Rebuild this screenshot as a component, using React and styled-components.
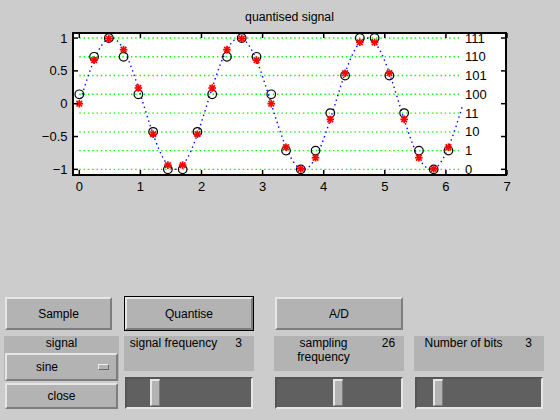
import React from 'react';
import styled, { createGlobalStyle } from 'styled-components';

const FONT = `"Liberation Sans", Arial, Helvetica, sans-serif`;

const GlobalStyle = createGlobalStyle`
  body {
    margin: 0;
    background: #cccccc;
    font-family: ${FONT};
  }
`;

const Figure = styled.div`
  width: 560px;
  height: 420px;
  display: flex;
  flex-direction: column;
  background: #cccccc;
  overflow: hidden;
`;

const PlotSvg = styled.svg`
  display: block;
  font-family: ${FONT};
`;

const Controls = styled.div`
  margin-top: auto;
  display: flex;
  padding: 0 0 11px 4px;
  font-size: 12px;
  color: #000;
`;

const Column = styled.div`
  display: flex;
  flex-direction: column;
  width: ${p => p.$w}px;
  margin-left: ${p => p.$gap || 0}px;
`;

const ButtonSlot = styled.div`
  height: 35px;
  display: flex;
`;

const PushButton = styled.button`
  box-sizing: border-box;
  width: ${p => p.$w}px;
  height: 33px;
  margin: 1px;
  padding: 0;
  background: #b3b3b3;
  border: 2px solid;
  border-color: #e6e6e6 #7d7d7d #7d7d7d #e6e6e6;
  outline: ${p => (p.$focused ? '1px solid #000' : 'none')};
  font-family: ${FONT};
  font-size: 12px;
  color: #000;
`;

const CloseButton = styled(PushButton)`
  height: 26px;
  margin: 2px 1px 0;
`;

const Panel = styled.div`
  display: flex;
  height: 35px;
  margin-top: 5px;
  background: #b3b3b3;
  line-height: 14px;
`;

const PanelLabel = styled.div`
  width: 99px;
  text-align: center;
`;

const PanelValue = styled.div`
  width: 31px;
  text-align: center;
`;

const SignalGroup = styled.div`
  display: flex;
  flex-direction: column;
  height: 45px;
  margin-top: 5px;
  background: #b3b3b3;
`;

const GroupTitle = styled.div`
  height: 17px;
  line-height: 14px;
  text-align: center;
`;

const Popup = styled.div`
  box-sizing: border-box;
  display: flex;
  align-items: center;
  height: 28px;
  margin: 0 1px;
  background: #b3b3b3;
  border: 2px solid;
  border-color: #e6e6e6 #7d7d7d #7d7d7d #e6e6e6;
`;

const PopupText = styled.span`
  flex: 1;
  text-align: center;
`;

const PopupMark = styled.span`
  box-sizing: border-box;
  width: 11px;
  height: 6px;
  margin: 0 7px 0 11px;
  background: #b3b3b3;
  border: 1px solid;
  border-color: #eeeeee #6a6a6a #6a6a6a #eeeeee;
`;

const Slider = styled.div`
  position: relative;
  box-sizing: border-box;
  height: 32px;
  margin: 6px 1px 0;
  background: #606060;
  border: 2px solid;
  border-color: #555555 #e6e6e6 #e6e6e6 #555555;
`;

const Thumb = styled.div`
  position: absolute;
  top: 0;
  bottom: 1px;
  width: 10px;
  box-sizing: border-box;
  background: #b3b3b3;
  border-style: solid;
  border-width: 2px 1px 1px 2px;
  border-color: #e6e6e6 #7d7d7d #7d7d7d #e6e6e6;
`;

function ValueSlider({ value, min, max }) {
  const travel = 124 - 10;
  const left = ((value - min) / (max - min)) * travel;
  return (
    <Slider>
      <Thumb style={{ left: `${left}px` }} />
    </Slider>
  );
}

// axes mapping
const X = t => 79.3 + t * 61.1;
const Y = v => 103.7 - v * 65.65;

const N = 26;
const BITS = 3;
const LEVELS = 2 ** BITS;
const STEP = (LEVELS - 1) / 2;

const samples = Array.from({ length: N }, (_, k) => {
  const t = (k * 2 * Math.PI) / N;
  let v = Math.sin(3 * t);
  if (Math.abs(v) < 1e-9) v = 0;
  const q = Math.round((v + 1) * STEP) / STEP - 1;
  return { t, v, q };
});

const curve = [];
for (let t = 0; t <= 2 * Math.PI + 0.001; t += 0.02) {
  curve.push(`${X(t).toFixed(2)},${Y(Math.sin(3 * t)).toFixed(2)}`);
}

const levels = Array.from({ length: LEVELS }, (_, i) => ({
  v: -1 + i / STEP,
  label: i.toString(2),
}));

const yTicks = [
  { v: 1, label: '1' },
  { v: 0.5, label: '0.5' },
  { v: 0, label: '0' },
  { v: -0.5, label: '\u22120.5' },
  { v: -1, label: '\u22121' },
];

function Star({ x, y }) {
  const r = 3.8;
  const d = 2.8;
  return (
    <g stroke="#ff0000" strokeWidth="1.7">
      <line x1={x - r} y1={y} x2={x + r} y2={y} />
      <line x1={x} y1={y - r} x2={x} y2={y + r} />
      <line x1={x - d} y1={y - d} x2={x + d} y2={y + d} />
      <line x1={x - d} y1={y + d} x2={x + d} y2={y - d} />
    </g>
  );
}

function QuantPlot() {
  const x0 = X(0);
  const x2pi = X(2 * Math.PI);
  return (
    <PlotSvg width="560" height="200" viewBox="0 0 560 200">
      <text x="289.5" y="21" fontSize="12.3" textAnchor="middle" fill="#000">
        quantised signal
      </text>
      <rect x="73" y="33" width="433" height="142" fill="#ffffff" />

      {levels.map(l => (
        <line
          key={l.label}
          x1={x0}
          x2={x2pi - 2}
          y1={Y(l.v)}
          y2={Y(l.v)}
          stroke="#00ff00"
          strokeWidth="1.4"
          strokeDasharray="1.4 2.9"
        />
      ))}

      <polyline
        points={curve.join(' ')}
        fill="none"
        stroke="#0000ff"
        strokeWidth="1.4"
        strokeDasharray="1.4 3.4"
      />

      {samples.map((s, i) => (
        <circle key={`c${i}`} cx={X(s.t)} cy={Y(s.q)} r="4.3" fill="none" stroke="#000" strokeWidth="1.2" />
      ))}
      {samples.map((s, i) => (
        <Star key={`s${i}`} x={X(s.t)} y={Y(s.v)} />
      ))}

      {levels.map(l => (
        <text key={`t${l.label}`} x="465" y={Y(l.v) + 4.6} fontSize="13" fill="#000">
          {l.label}
        </text>
      ))}

      <rect x="73" y="33" width="433" height="142" fill="none" stroke="#000" strokeWidth="2" />

      {[0, 1, 2, 3, 4, 5, 6, 7].map(i => (
        <g key={`x${i}`} stroke="#000" strokeWidth="1.5">
          <line x1={X(i)} x2={X(i)} y1="175" y2="170" />
          <line x1={X(i)} x2={X(i)} y1="33" y2="38" />
        </g>
      ))}
      {yTicks.map(t => (
        <g key={`y${t.label}`} stroke="#000" strokeWidth="1.5">
          <line x1="73" x2="78" y1={Y(t.v)} y2={Y(t.v)} />
          <line x1="506" x2="501" y1={Y(t.v)} y2={Y(t.v)} />
        </g>
      ))}

      {[0, 1, 2, 3, 4, 5, 6, 7].map(i => (
        <text key={`xl${i}`} x={X(i)} y="191" fontSize="13" textAnchor="middle" fill="#000">
          {i}
        </text>
      ))}
      {yTicks.map(t => (
        <text key={`yl${t.label}`} x="67.5" y={Y(t.v) + 4.6} fontSize="13" textAnchor="end" fill="#000">
          {t.label}
        </text>
      ))}
    </PlotSvg>
  );
}

export default function App() {
  return (
    <Figure>
      <GlobalStyle />
      <QuantPlot />
      <Controls>
        <Column $w={115}>
          <ButtonSlot>
            <PushButton $w={107}>Sample</PushButton>
          </ButtonSlot>
          <SignalGroup>
            <GroupTitle>signal</GroupTitle>
            <Popup>
              <PopupText>sine</PopupText>
              <PopupMark />
            </Popup>
          </SignalGroup>
          <CloseButton $w={113}>close</CloseButton>
        </Column>

        <Column $w={130} $gap={5}>
          <ButtonSlot>
            <PushButton $w={128} $focused>Quantise</PushButton>
          </ButtonSlot>
          <Panel>
            <PanelLabel>signal frequency</PanelLabel>
            <PanelValue>3</PanelValue>
          </Panel>
          <ValueSlider value={3} min={1} max={11} />
        </Column>

        <Column $w={130} $gap={20}>
          <ButtonSlot>
            <PushButton $w={128}>A/D</PushButton>
          </ButtonSlot>
          <Panel>
            <PanelLabel>sampling frequency</PanelLabel>
            <PanelValue>26</PanelValue>
          </Panel>
          <ValueSlider value={26} min={2} max={51} />
        </Column>

        <Column $w={130} $gap={10}>
          <ButtonSlot />
          <Panel>
            <PanelLabel>Number of bits</PanelLabel>
            <PanelValue>3</PanelValue>
          </Panel>
          <ValueSlider value={3} min={2} max={9} />
        </Column>
      </Controls>
    </Figure>
  );
}
